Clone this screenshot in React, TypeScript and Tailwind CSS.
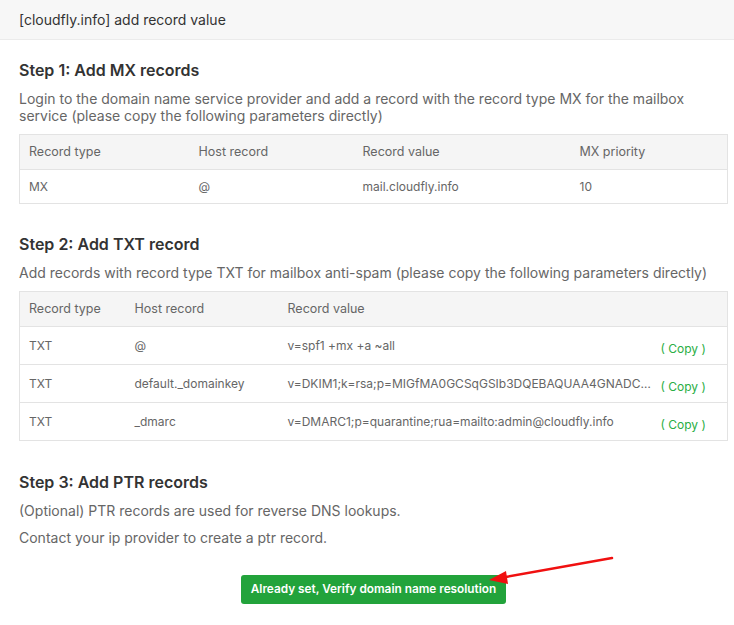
import React from "react";

const mxRows = [{ type: "MX", host: "@", value: "mail.cloudfly.info", priority: "10" }];

const txtRows = [
  { type: "TXT", host: "@", value: "v=spf1 +mx +a ~all" },
  {
    type: "TXT",
    host: "default._domainkey",
    value:
      "v=DKIM1;k=rsa;p=MIGfMA0GCSqGSIb3DQEBAQUAA4GNADCBiQKBgQC7vXzq3Jp8ZkR2lV0mYd1",
  },
  { type: "TXT", host: "_dmarc", value: "v=DMARC1;p=quarantine;rua=mailto:admin@cloudfly.info" },
];

export default function App() {
  return (
    <div
      className="relative w-[734px] h-[625px] bg-white text-[#333] overflow-hidden"
      style={{ fontFamily: "Inter, 'Noto Sans', sans-serif" }}
    >
      {/* header */}
      <div className="h-[40px] flex items-center px-[19px] bg-[#f7f7f7] border-b border-[#ebebeb] text-[14px] text-[#333]">
        [cloudfly.info] add record value
      </div>

      <div className="pl-[19px] pr-[6px]">
        {/* Step 1 */}
        <h3 className="mt-[18px] text-[16px] leading-[24px] font-semibold text-[#333]">Step 1: Add MX records</h3>
        <p className="mt-[8px] text-[14px] leading-[17px] text-[#666]">
          Login to the domain name service provider and add a record with the record type MX for the mailbox
          service (please copy the following parameters directly)
        </p>
        <table className="mt-[10px] w-full table-fixed border-collapse border border-[#e3e3e3] text-[12px] text-[#666]">
          <colgroup>
            <col className="w-[170px]" />
            <col className="w-[164px]" />
            <col className="w-[217px]" />
            <col />
          </colgroup>
          <thead>
            <tr className="h-[35px] bg-[#f5f5f5] text-[12.5px]">
              <th className="px-[9px] text-left font-normal">Record type</th>
              <th className="px-[9px] text-left font-normal">Host record</th>
              <th className="px-[9px] text-left font-normal">Record value</th>
              <th className="px-[9px] text-left font-normal">MX priority</th>
            </tr>
          </thead>
          <tbody>
            {mxRows.map((r) => (
              <tr key={r.value} className="h-[34px] border-t border-[#e3e3e3]">
                <td className="px-[9px]">{r.type}</td>
                <td className="px-[9px]">{r.host}</td>
                <td className="px-[9px]">{r.value}</td>
                <td className="px-[9px]">{r.priority}</td>
              </tr>
            ))}
          </tbody>
        </table>

        {/* Step 2 */}
        <h3 className="mt-[28px] text-[16px] leading-[24px] font-semibold text-[#333]">Step 2: Add TXT record</h3>
        <p className="mt-[8px] text-[14px] leading-[17px] text-[#666]">
          Add records with record type TXT for mailbox anti-spam (please copy the following parameters directly)
        </p>
        <table className="mt-[10px] w-full table-fixed border-collapse border border-[#e3e3e3] text-[12px] text-[#666]">
          <colgroup>
            <col className="w-[106px]" />
            <col className="w-[153px]" />
            <col className="w-[378px]" />
            <col />
          </colgroup>
          <thead>
            <tr className="h-[35px] bg-[#f5f5f5] text-[12.5px]">
              <th className="px-[9px] text-left font-normal">Record type</th>
              <th className="px-[9px] text-left font-normal">Host record</th>
              <th className="px-[9px] text-left font-normal">Record value</th>
              <th />
            </tr>
          </thead>
          <tbody>
            {txtRows.map((r) => (
              <tr key={r.host} className="h-[38px] border-t border-[#e3e3e3]">
                <td className="px-[9px] pt-[1px]">{r.type}</td>
                <td className="px-[9px] pt-[1px]">{r.host}</td>
                <td className="pl-[9px] pr-[2px] truncate">{r.value}</td>
                <td className="pl-[4px] pt-[7px] text-[12px] text-[#2aae45] whitespace-nowrap">( Copy )</td>
              </tr>
            ))}
          </tbody>
        </table>

        {/* Step 3 */}
        <h3 className="mt-[29px] text-[16px] leading-[24px] font-semibold text-[#333]">Step 3: Add PTR records</h3>
        <p className="mt-[8px] text-[14px] leading-[17px] text-[#666]">
          (Optional) PTR records are used for reverse DNS lookups.
        </p>
        <p className="mt-[10px] text-[14px] leading-[17px] text-[#666]">Contact your ip provider to create a ptr record.</p>

        <div className="mt-[29px] flex justify-center">
          <button
            type="button"
            className="h-[29px] px-[10px] rounded-[3px] bg-[#22a33b] text-white text-[11.8px] font-semibold"
          >
            Already set, Verify domain name resolution
          </button>
        </div>
      </div>

      {/* annotation arrow */}
      <svg className="absolute left-0 top-0 pointer-events-none" width="734" height="625">
        <line x1="612" y1="558" x2="500" y2="578" stroke="#f01010" strokeWidth="2.5" strokeLinecap="round" />
        <polygon points="489,580 506,571 508,584" fill="#f01010" />
      </svg>
    </div>
  );
}
